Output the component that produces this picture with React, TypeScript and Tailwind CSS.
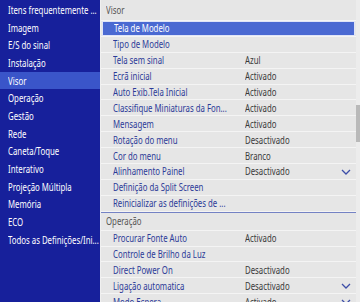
import React from "react"

// ---------------------------------------------------------------------------
// Data
// ---------------------------------------------------------------------------
const MENU = [
  "Itens frequentemente ...",
  "Imagem",
  "E/S do sinal",
  "Instalação",
  "Visor",
  "Operação",
  "Gestão",
  "Rede",
  "Caneta/Toque",
  "Interativo",
  "Projeção Múltipla",
  "Memória",
  "ECO",
  "Todos as Definições/Ini...",
]

type Row = { label: string; value?: string; chevron?: boolean; active?: boolean }

const VISOR: Row[] = [
  { label: "Tela de Modelo", active: true },
  { label: "Tipo de Modelo" },
  { label: "Tela sem sinal", value: "Azul" },
  { label: "Ecrã inicial", value: "Activado" },
  { label: "Auto Exib.Tela Inicial", value: "Activado" },
  { label: "Classifique Miniaturas da Fon...", value: "Activado" },
  { label: "Mensagem", value: "Activado" },
  { label: "Rotação do menu", value: "Desactivado" },
  { label: "Cor do menu", value: "Branco" },
  { label: "Alinhamento Painel", value: "Desactivado", chevron: true },
  { label: "Definição da Split Screen" },
  { label: "Reinicializar as definições de ..." },
]

const OPERACAO: Row[] = [
  { label: "Procurar Fonte Auto", value: "Activado" },
  { label: "Controle de Brilho da Luz" },
  { label: "Direct Power On", value: "Desactivado" },
  { label: "Ligação automatica", value: "Desactivado", chevron: true },
  { label: "Modo Espera", value: "Activado", chevron: true },
]

// the menu font is a narrow one, squeeze the regular face to match
function Txt({ children }: { children: React.ReactNode }) {
  return <span className="inline-block origin-left scale-x-[0.78] whitespace-nowrap">{children}</span>
}

function Chevron() {
  return (
    <svg width="10" height="6" viewBox="0 0 10 6" className="absolute left-[240px] top-[5px]">
      <path d="M1 1 L5 5 L9 1" fill="none" stroke="#3d4ea8" strokeWidth="1.3" />
    </svg>
  )
}

function ItemRow({ row }: { row: Row }) {
  if (row.active) {
    return (
      <div className="relative h-[15.9px] border-b border-[#f4f4f4]">
        <div className="absolute inset-x-[1px] inset-y-0 flex items-center border border-[#dfe4f7] bg-[#4a69d2] pl-[11px] text-white">
          <Txt>{row.label}</Txt>
        </div>
      </div>
    )
  }
  return (
    <div className="relative flex h-[15.9px] shrink-0 items-center whitespace-nowrap border-b border-[#f4f4f4] pl-[12px]">
      <span className="w-[132px] text-[#2c3b98]">
        <Txt>{row.label}</Txt>
      </span>
      {row.value && (
        <span className="text-[#3a3a3a]">
          <Txt>{row.value}</Txt>
        </span>
      )}
      {row.chevron && <Chevron />}
    </div>
  )
}

export default function App() {
  return (
    <div
      className="flex h-[302px] w-[360px] overflow-hidden text-[10px] leading-none"
      style={{ fontFamily: '"Noto Sans", "Open Sans", sans-serif' }}
    >
      {/* Left menu */}
      <div className="w-[100px] shrink-0 bg-[#17209b] pt-[1px] text-white">
        {MENU.map((m) => (
          <div
            key={m}
            className={
              "flex h-[17.7px] items-center pl-[8px] " + (m === "Visor" ? "bg-[#3a55c9]" : "")
            }
          >
            <Txt>{m}</Txt>
          </div>
        ))}
      </div>

      {/* Right panel */}
      <div className="flex flex-1 border-l border-[#f0f0f0] bg-[#e6e6e6]">
        <div className="flex-1 overflow-hidden">
          <div className="flex h-[21px] items-center border-b border-[#f4f4f4] pl-[5px] text-[#555]">
            <Txt>Visor</Txt>
          </div>
          {VISOR.map((r) => (
            <ItemRow key={r.label} row={r} />
          ))}
          <div className="h-[1px] bg-[#7482c4]" />
          <div className="flex h-[18px] items-center border-b border-[#f4f4f4] pl-[5px] text-[#555]">
            <Txt>Operação</Txt>
          </div>
          {OPERACAO.map((r) => (
            <ItemRow key={r.label} row={r} />
          ))}
        </div>
        {/* Scrollbar */}
        <div className="w-[4px] shrink-0 bg-[#ececec] pt-[105px]">
          <div className="h-[37px] bg-[#b9b9b9]" />
        </div>
      </div>
    </div>
  )
}
